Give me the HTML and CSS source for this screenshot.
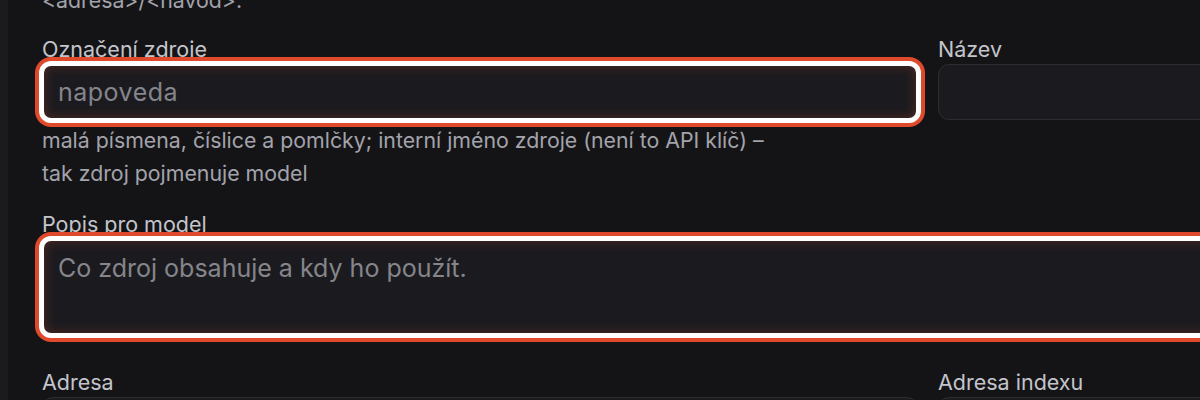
FILE: index.html
```html
<!DOCTYPE html>
<html lang="cs">
<head>
<meta charset="utf-8">
<title>Zdroj</title>
<link rel="stylesheet" href="styles.css">
</head>
<body>
<div class="app">
  <aside class="rail"></aside>
  <main class="page">
    <p class="intro">&lt;adresa&gt;/&lt;navod&gt;.</p>

    <div class="grid row-first">
      <div class="field">
        <label class="label" for="slug">Označení zdroje</label>
        <input id="slug" class="control control-focus mono" type="text" placeholder="napoveda">
        <p class="hint">malá písmena, číslice a pomlčky; interní jméno zdroje (není to API klíč) –<br>tak zdroj pojmenuje model</p>
      </div>
      <div class="field">
        <label class="label" for="name">Název</label>
        <input id="name" class="control" type="text">
      </div>
    </div>

    <div class="field row-desc">
      <label class="label" for="desc">Popis pro model</label>
      <textarea id="desc" class="control control-focus area" placeholder="Co zdroj obsahuje a kdy ho použít."></textarea>
    </div>

    <div class="grid">
      <div class="field">
        <label class="label" for="url">Adresa</label>
        <input id="url" class="control" type="text">
      </div>
      <div class="field">
        <label class="label" for="idx">Adresa indexu</label>
        <input id="idx" class="control" type="text">
      </div>
    </div>
  </main>
</div>
</body>
</html>
```

FILE: styles.css
```css
html, body {
  margin: 0;
  padding: 0;
  height: 100%;
  overflow: hidden;
  background: #141417;
}

body {
  font-family: Inter, "Noto Sans", "Liberation Sans", sans-serif;
  color: #c4c4cb;
}

.app {
  display: flex;
  height: 400px;
  width: 1900px;
}

.rail {
  width: 8px;
  flex: none;
  background: #1b1b1e;
}

.page {
  flex: none;
  width: 1772px;
  padding-left: 34px;
}

.intro {
  margin: -15px 0 19px;
  font-size: 21.3px;
  line-height: 30px;
  color: #a3a3ab;
}

.grid {
  display: grid;
  grid-template-columns: 876px 876px;
  column-gap: 20px;
}

.row-first {
  margin-bottom: 19px;
}

.row-desc {
  margin-bottom: 32px;
}

.field {
  display: flex;
  flex-direction: column;
}

.label {
  font-size: 21.5px;
  line-height: 30px;
  color: #c4c4cb;
}

.control {
  position: relative;
  box-sizing: border-box;
  height: 56px;
  width: 100%;
  margin: 0;
  padding: 0 14px;
  border: 1px solid #2c2c31;
  border-radius: 11px;
  background: #1b1b1f;
  color: #e4e4e7;
  font-family: inherit;
  font-size: 25px;
  outline: none;
}

.control::placeholder {
  color: #85858c;
  opacity: 1;
}

.control-focus {
  border: 2px solid #ffffff;
  border-radius: 9px;
  padding-left: 14px;
  box-shadow:
    0 0 0 3px #ffffff,
    0 0 0 7px #e04a2c,
    inset 0 0 12px rgba(214, 74, 48, 0.3);
}

.mono {
  letter-spacing: 0.5px;
}

.area {
  height: 96px;
  padding-top: 12px;
  line-height: 30px;
  resize: none;
  display: block;
}

.hint {
  margin: 4px 0 0;
  font-size: 21.3px;
  line-height: 33px;
  color: #a3a3ab;
}
```
